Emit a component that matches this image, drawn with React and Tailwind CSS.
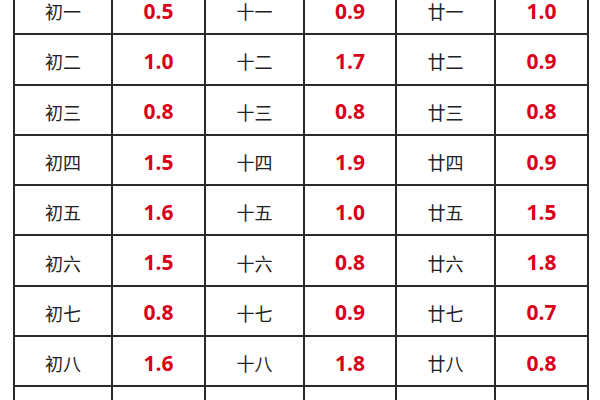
import React from "react";

const rows = [
  ["初一", "0.5", "十一", "0.9", "廿一", "1.0"],
  ["初二", "1.0", "十二", "1.7", "廿二", "0.9"],
  ["初三", "0.8", "十三", "0.8", "廿三", "0.8"],
  ["初四", "1.5", "十四", "1.9", "廿四", "0.9"],
  ["初五", "1.6", "十五", "1.0", "廿五", "1.5"],
  ["初六", "1.5", "十六", "0.8", "廿六", "1.8"],
  ["初七", "0.8", "十七", "0.9", "廿七", "0.7"],
  ["初八", "1.6", "十八", "1.8", "廿八", "0.8"],
];

export default function App() {
  return (
    <div className="w-[600px] h-[400px] overflow-hidden bg-white">
      <div className="ml-[13px] -mt-[17px] w-[576px] grid grid-cols-[96px_91px_97px_90px_97px_91px] gap-[2px] p-[2px] bg-[#2a2a2a]">
        {rows.map((row, i) =>
          row.map((cell, j) =>
            j % 2 === 0 ? (
              <div
                key={`${i}-${j}`}
                className="h-[48.3px] pt-[4px] bg-white flex items-center justify-center text-[18px] leading-none text-[#222] font-['Noto_Sans_CJK_SC',sans-serif]"
              >
                {cell}
              </div>
            ) : (
              <div
                key={`${i}-${j}`}
                className="h-[48.3px] pt-[4px] bg-white flex items-center justify-center text-[21px] leading-none font-bold text-[#d9001b] font-['Open_Sans','Noto_Sans',sans-serif]"
              >
                {cell}
              </div>
            )
          )
        )}
        {["初九", "十九", "廿九"].map((label) => (
          <React.Fragment key={label}>
            <div className="h-[48.3px] bg-white" aria-label={label} />
            <div className="h-[48.3px] bg-white" />
          </React.Fragment>
        ))}
      </div>
    </div>
  );
}
